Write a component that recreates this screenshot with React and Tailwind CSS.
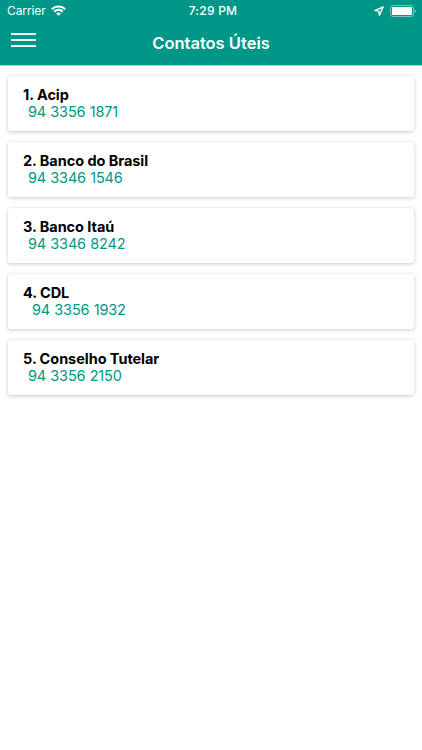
const contacts = [
  { name: '1. Acip', phone: '94 3356 1871', pad: 'pl-[5px]' },
  { name: '2. Banco do Brasil', phone: '94 3346 1546', pad: 'pl-[5px]' },
  { name: '3. Banco Itaú', phone: '94 3346 8242', pad: 'pl-[5px]' },
  { name: '4. CDL', phone: '94 3356 1932', pad: 'pl-[9px]' },
  { name: '5. Conselho Tutelar', phone: '94 3356 2150', pad: 'pl-[5px]' },
];

function WifiIcon() {
  return (
    <svg className="mb-[2px]" width="15" height="11" viewBox="0 0 15 11" fill="none" stroke="white" strokeWidth="2.1">
      <path d="M0.9 4.2C4.5 0.5 10.5 0.5 14.1 4.2" />
      <path d="M3.2 6.7C5.7 4.3 9.3 4.3 11.8 6.7" />
      <path d="M5.1 8.4C6.5 7.1 8.5 7.1 9.9 8.4L7.5 10.8Z" fill="white" stroke="none" />
    </svg>
  );
}

function StatusBar() {
  return (
    <div className="grid h-[22px] grid-cols-[130px_1fr_126px] items-center pl-[7px] pr-[6px] text-[12px] leading-[22px]">
      <div className="flex items-center gap-[5px]">
        <span className="tracking-[-0.1px]">Carrier</span>
        <WifiIcon />
      </div>
      <div className="pr-[1px] text-center font-medium tracking-[0.25px]">7:29 PM</div>
      <div className="flex items-center justify-end gap-[6px]">
        <svg width="10" height="10" viewBox="0 0 10 10" fill="none" stroke="white" strokeWidth="1.3" strokeLinejoin="round">
          <path d="M9.2 0.8L0.8 4.6L4.8 5.2L5.4 9.2Z" />
        </svg>
        <svg className="mb-px" width="26" height="12" viewBox="0 0 26 12">
          <rect x="0.5" y="0.5" width="23" height="11" rx="2.6" fill="none" stroke="white" strokeOpacity="0.45" />
          <rect x="2" y="2" width="20" height="8" rx="1" fill="white" />
          <path d="M24.7 4.2Q26 4.6 26 6T24.7 7.8Z" fill="white" fillOpacity="0.5" />
        </svg>
      </div>
    </div>
  );
}

export default function App() {
  return (
    <div className="h-[750px] w-[422px] overflow-hidden bg-white font-['Inter','Liberation_Sans',sans-serif]">
      <header className="h-[66px] border-b border-[#9fd6d0] bg-[#009688] text-white">
        <StatusBar />
        <div className="grid h-[43px] grid-cols-[100px_1fr_100px] items-center">
          <button className="ml-[11px] mt-[-7px] flex w-[25px] flex-col gap-[4px]" aria-label="Menu">
            <span className="h-[2px] w-full bg-[#eef8f7]" />
            <span className="h-[2px] w-full bg-[#eef8f7]" />
            <span className="h-[2px] w-full bg-[#eef8f7]" />
          </button>
          <h1 className="mt-[-2px] text-center text-[16.5px] font-semibold leading-[20px]">Contatos Úteis</h1>
        </div>
      </header>
      <main className="flex flex-col gap-[11px] px-[8px] pt-[9.6px]">
        {contacts.map((c) => (
          <section
            key={c.name}
            className="h-[55px] rounded-[2px] bg-white pl-[15px] pt-[10.9px] text-[14.5px] leading-[17px] shadow-[0_1px_4px_rgba(0,0,0,0.2),0_0_1px_rgba(0,0,0,0.12)]"
          >
            <h2 className="font-bold tracking-[-0.05px] text-black">{c.name}</h2>
            <p className={`${c.pad} tracking-[-0.17px] text-[#009688] [word-spacing:0.4px]`}>{c.phone}</p>
          </section>
        ))}
      </main>
    </div>
  );
}
